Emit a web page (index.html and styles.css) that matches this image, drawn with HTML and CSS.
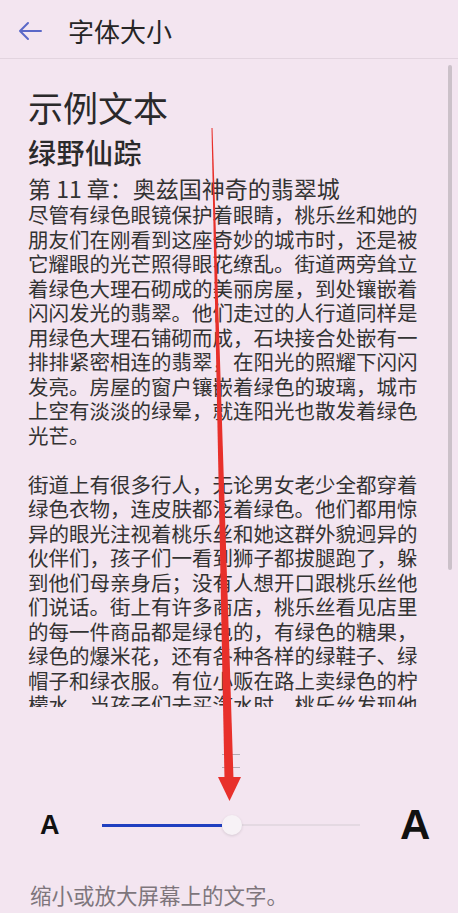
FILE: index.html
```html
<!DOCTYPE html>
<html lang="zh-CN">
<head>
  <meta charset="UTF-8" />
  <meta name="viewport" content="width=device-width, initial-scale=1.0"/>
  <title>字体大小</title>
  <link rel="stylesheet" href="styles.css">
</head>
<body>
  <header class="top-bar">
    <svg class="back-icon" width="26" height="20" viewBox="0 0 26 20">
      <path d="M24 10H3M11 2L3 10l8 8" fill="none" stroke="#5a68c8" stroke-width="2" stroke-linecap="round" stroke-linejoin="round"/>
    </svg>
    <h1 class="page-title">字体大小</h1>
  </header>

  <section class="preview">
    <h2 class="sample-title">示例文本</h2>
    <h3 class="book-title">绿野仙踪</h3>
    <h4 class="chapter">第 11 章：奥兹国神奇的翡翠城</h4>
    <p class="para">尽管有绿色眼镜保护着眼睛，桃乐丝和她的朋友们在刚看到这座奇妙的城市时，还是被它耀眼的光芒照得眼花缭乱。街道两旁耸立着绿色大理石砌成的美丽房屋，到处镶嵌着闪闪发光的翡翠。他们走过的人行道同样是用绿色大理石铺砌而成，石块接合处嵌有一排排紧密相连的翡翠，在阳光的照耀下闪闪发亮。房屋的窗户镶嵌着绿色的玻璃，城市上空有淡淡的绿晕，就连阳光也散发着绿色光芒。</p>
    <p class="para">街道上有很多行人，无论男女老少全都穿着绿色衣物，连皮肤都泛着绿色。他们都用惊异的眼光注视着桃乐丝和她这群外貌迥异的伙伴们，孩子们一看到狮子都拔腿跑了，躲到他们母亲身后；没有人想开口跟桃乐丝他们说话。街上有许多商店，桃乐丝看见店里的每一件商品都是绿色的，有绿色的糖果，绿色的爆米花，还有各种各样的绿鞋子、绿帽子和绿衣服。有位小贩在路上卖绿色的柠檬水，当孩子们去买汽水时，桃乐丝发现他们付的是绿色的硬币。</p>
    <div class="scroll-thumb"></div>
  </section>

  <section class="size-panel">
    <div class="ticks">
      <span></span>
      <span></span>
    </div>
    <div class="slider-row">
      <span class="a-small">A</span>
      <div class="track">
        <div class="track-fill"></div>
        <div class="thumb"></div>
      </div>
      <span class="a-big">A</span>
    </div>
    <p class="caption">缩小或放大屏幕上的文字。</p>
  </section>

  <!-- red guide arrow drawn over the page -->
  <svg class="guide-arrow" width="458" height="913" viewBox="0 0 458 913">
    <polygon points="211.5,128 212.5,128 233.5,779 224.5,779" fill="#e8302b"/>
    <polygon points="218,777 241,777 229.5,801" fill="#e8302b"/>
  </svg>
</body>
</html>
```

FILE: styles.css
```css
body {
  margin: 0;
  width: 458px;
  height: 913px;
  overflow: hidden;
  position: relative;
  background: #f3e5f0;
  color: #2b2a2b;
  font-family: "Noto Sans CJK SC", "Noto Sans", sans-serif;
}

.top-bar {
  height: 58px;
  display: flex;
  align-items: center;
  border-bottom: 1px solid #e2d4df;
}

.back-icon {
  margin: 4px 0 0 17px;
}

.page-title {
  margin: 2px 0 0 25px;
  font-size: 26px;
  font-weight: 400;
  color: #262526;
}

.preview {
  position: relative;
  height: 648px;
  overflow: hidden;
  padding: 28px 0 0 28px;
  box-sizing: border-box;
}

.sample-title {
  margin: 0;
  font-size: 35px;
  line-height: 40px;
  font-weight: 400;
  color: #2a292a;
}

.book-title {
  margin: 8px 0 0;
  font-size: 28px;
  line-height: 34px;
  font-weight: 500;
  letter-spacing: 0.5px;
}

.chapter {
  margin: 5px 0 0;
  font-size: 23px;
  line-height: 28px;
  font-weight: 400;
  color: #333;
}

.para {
  width: 392px;
  margin: 0 0 24.5px;
  font-size: 20.5px;
  line-height: 24.5px;
  color: #333;
}

.scroll-thumb {
  position: absolute;
  top: 6px;
  right: 6px;
  width: 4px;
  height: 505px;
  border-radius: 2px;
  background: #cbc1c9;
}

.ticks {
  margin: 47px 0 0 222px;
  width: 18px;
  display: flex;
  flex-direction: column;
  gap: 12px;
}

.ticks span {
  height: 1px;
  background: #b5acb4;
}

.slider-row {
  display: flex;
  align-items: center;
  height: 40px;
  margin-top: 37px;
  padding-left: 40px;
  font-family: "Liberation Sans", Arial, sans-serif;
  font-weight: 700;
  color: #111;
}

.a-small {
  width: 62px;
  font-size: 27px;
  line-height: 1;
}

.track {
  position: relative;
  width: 258px;
  height: 2px;
  background: #e4d9e2;
}

.track-fill {
  position: absolute;
  left: 0;
  top: -0.5px;
  width: 120px;
  height: 3px;
  background: #1f3fc0;
}

.thumb {
  position: absolute;
  left: 120px;
  top: -9px;
  width: 20px;
  height: 20px;
  border-radius: 50%;
  background: #f7f2f6;
  box-shadow: 0 1px 3px rgba(0, 0, 0, 0.12);
}

.a-big {
  margin-left: 40px;
  font-size: 42px;
  line-height: 1;
}

.caption {
  margin: 36px 0 0 30px;
  font-size: 21.5px;
  line-height: 28px;
  color: #7e767c;
}

.guide-arrow {
  position: absolute;
  top: 0;
  left: 0;
  pointer-events: none;
}
```
